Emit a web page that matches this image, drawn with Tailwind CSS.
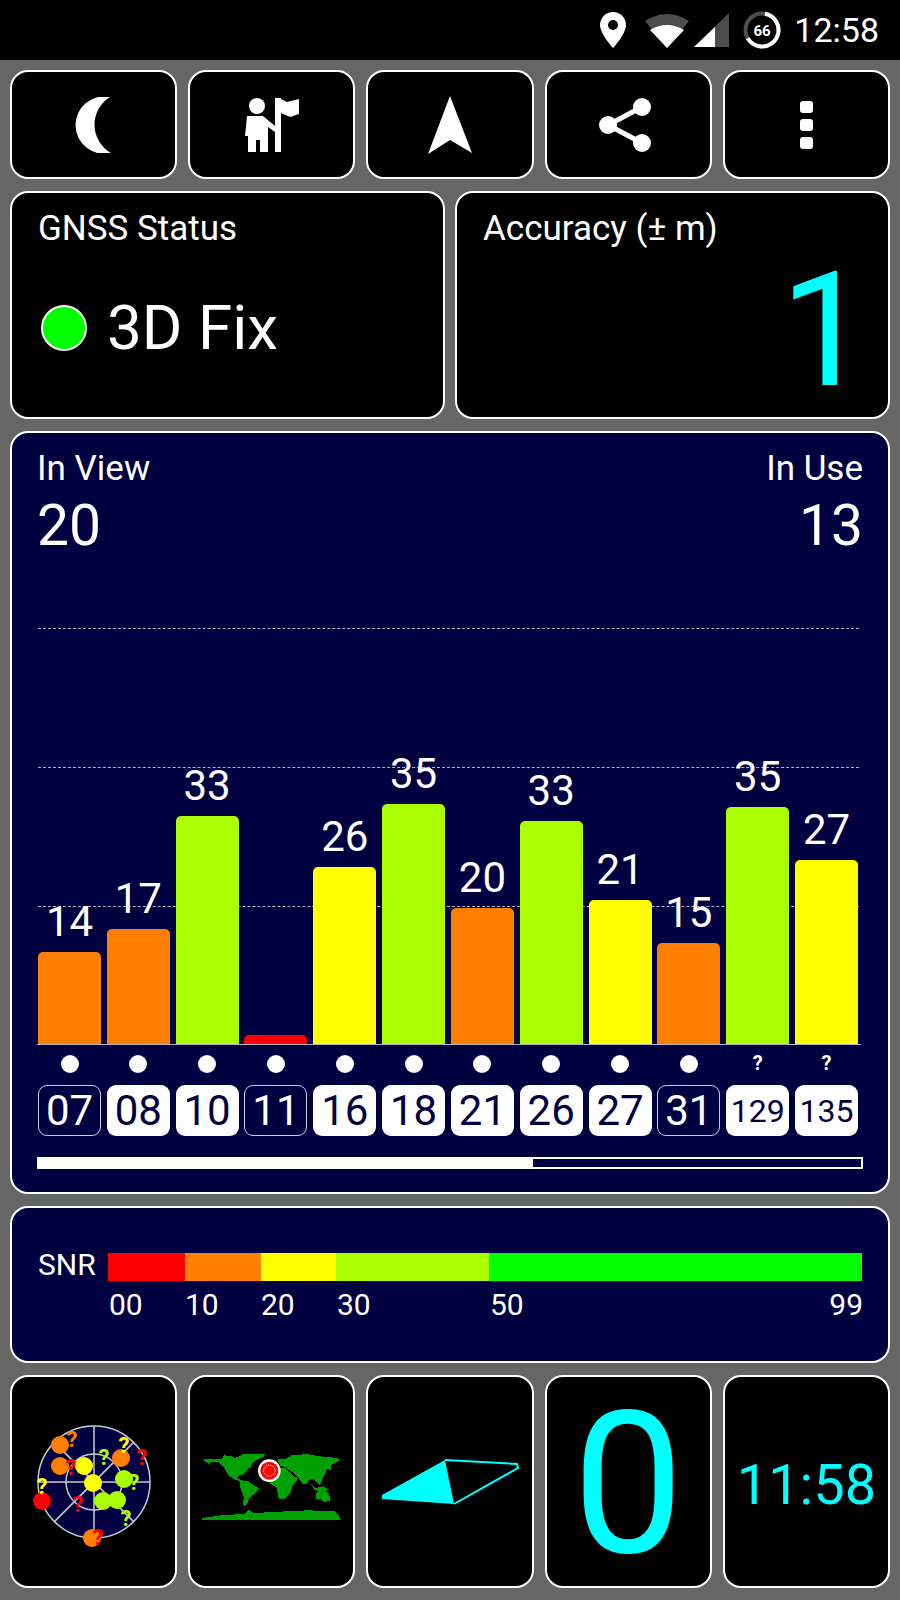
<!DOCTYPE html>
<html lang="en">
<head>
  <meta charset="UTF-8" />
  <title>GPS Test</title>
  <script src="https://cdn.jsdelivr.net/npm/@tailwindcss/browser@4"></script>
</head>
<body class="bg-[#666666] h-[1600px] w-[900px] overflow-hidden font-['Roboto',sans-serif] text-white">

  <!-- status bar -->
  <div class="h-[60px] bg-black flex items-center justify-end pr-[21px]">
    <svg class="w-[26px] h-[36px]" viewBox="0 0 26 36"><path fill="#fff" d="M13 0C5.8 0 0 5.8 0 13c0 9 13 23 13 23s13-14 13-23C26 5.800 20.200 0 13 0z"/><circle cx="13" cy="13" r="5" fill="#000"/></svg>
    <svg class="w-[44px] h-[35px] ml-[19px]" viewBox="0 0 44 35"><path fill="#4d4d4d" d="M0 8Q22-6 44 8L22 35z"/><path fill="#fff" d="M5 17Q22 7 39 17L22 35z"/></svg>
    <svg class="w-[35px] h-[34px] ml-[5px]" viewBox="0 0 35 34"><path fill="#4d4d4d" d="M0 34L35 0V34z"/><path fill="#fff" d="M0 34L21 14V34z"/></svg>
    <svg class="w-[38px] h-[38px] ml-[14px]" viewBox="0 0 38 38">
      <circle cx="19" cy="19" r="16.500" fill="none" stroke="#4d4d4d" stroke-width="4"/>
      <circle cx="19" cy="19" r="16.500" fill="none" stroke="#fff" stroke-width="4" pathLength="100" stroke-dasharray="64 36" transform="rotate(-80 19 19)"/>
      <text x="19" y="24.500" text-anchor="middle" fill="#fff" font-size="15" font-weight="700" font-family="Roboto">66</text>
    </svg>
    <span class="text-[34px] leading-none ml-[13px]">12:58</span>
  </div>

  <div class="px-[10px] pt-[10px] flex flex-col gap-[12px]">

    <!-- toolbar -->
    <div class="grid grid-cols-5 gap-[11px] h-[109px]">
      <div class="bg-black border-2 border-white rounded-[18px] flex items-center justify-center">
        <svg class="w-[36px] h-[56px] mr-[2px]" viewBox="0 0 36 56"><path fill="#fff" d="M35 0A28.700 28.700 0 1 0 36 56A32.500 32.500 0 0 1 35 0z"/></svg>
      </div>
      <div class="bg-black border-2 border-white rounded-[18px] flex items-center justify-center">
        <svg class="w-[60px] h-[60px]" viewBox="242 95 60 60"><circle cx="257" cy="106" r="8" fill="#fff"/><path fill="#fff" d="M247 116H263L275 126V132L268 127V152H260V140H256V152H248V136H245z"/><path fill="#fff" d="M275 98H281V99L287 102 299 99V114L290 117 281 113V152H275z"/></svg>
      </div>
      <div class="bg-black border-2 border-white rounded-[18px] flex items-center justify-center">
        <svg class="w-[44px] h-[58px]" viewBox="0 0 44 58"><path fill="#fff" d="M22 0L44 57 22 44 0 58z"/></svg>
      </div>
      <div class="bg-black border-2 border-white rounded-[18px] flex items-center justify-center">
        <svg class="w-[52px] h-[54px] mr-[6px]" viewBox="0 0 52 54"><path stroke="#fff" stroke-width="5" fill="none" d="M43 9L9 27 43 45"/><circle cx="43" cy="9" r="9" fill="#fff"/><circle cx="9" cy="27" r="9" fill="#fff"/><circle cx="43" cy="45" r="9" fill="#fff"/></svg>
      </div>
      <div class="bg-black border-2 border-white rounded-[18px] flex flex-col items-center justify-center gap-[6px]">
        <div class="w-[13px] h-[12px] bg-white rounded-[3px]"></div>
        <div class="w-[13px] h-[12px] bg-white rounded-[3px]"></div>
        <div class="w-[13px] h-[12px] bg-white rounded-[3px]"></div>
      </div>
    </div>

    <!-- status + accuracy -->
    <div class="grid grid-cols-2 gap-[10px] h-[228px]">
      <div class="bg-black border-2 border-white rounded-[18px] pl-[26px] pt-[16px]">
        <div class="text-[35px] leading-[40px]">GNSS Status</div>
        <div class="flex items-center mt-[45px] ml-[3px]">
          <div class="w-[46px] h-[46px] rounded-full bg-[#00ff00] border-2 border-white"></div>
          <div class="text-[62px] leading-[68px] ml-[20px]">3D Fix</div>
        </div>
      </div>
      <div class="relative bg-black border-2 border-white rounded-[18px] pl-[26px] pt-[16px]">
        <div class="text-[35px] leading-[40px]">Accuracy (± m)</div>
        <div class="absolute right-[18px] -bottom-[9px] text-[160px] leading-[190px] text-[#00ffff]">1</div>
      </div>
    </div>

    <!-- satellites -->
    <div class="bg-[#000040] border-2 border-white rounded-[18px] h-[763px] px-[25px] pt-[12px]">
      <div class="flex justify-between">
        <div>
          <div class="text-[35px] leading-[48px] -mb-[8px]">In View</div>
          <div class="text-[57px] leading-[60px] mt-[11px]">20</div>
        </div>
        <div class="text-right">
          <div class="text-[35px] leading-[48px] -mb-[8px]">In Use</div>
          <div class="text-[57px] leading-[60px] mt-[11px]">13</div>
        </div>
      </div>

      <div class="relative h-[444px] mt-[45px] border-b border-white/70 mr-[2px]">
        <div class="absolute left-[1px] right-[2px] top-[27px] border-t border-dashed border-white/70"></div>
        <div class="absolute left-[1px] right-[2px] top-[166px] border-t border-dashed border-white/70"></div>
        <div class="absolute left-[1px] right-[2px] top-[305px] border-t border-dashed border-white/70"></div>
        <div id="bars" class="relative grid grid-cols-12 gap-x-[5.8px] h-full pl-[1px] pr-[3px]"></div>
      </div>

      <div id="marks" class="grid grid-cols-12 gap-x-[5.8px] h-[38px] pl-[1px] pr-[5px] items-center"></div>
      <div id="ids" class="grid grid-cols-12 gap-x-[5.8px] h-[51px] mt-[2px] pl-[1px] pr-[5px]"></div>

      <div class="mt-[21px] h-[12px] border-2 border-white flex">
        <div class="w-[494px] bg-white"></div>
      </div>
    </div>

    <!-- snr legend -->
    <div class="bg-[#000040] border-2 border-white rounded-[18px] h-[157px] pl-[26px] pr-[26px] pt-[45px]">
      <div class="flex items-center">
        <div class="w-[70px] text-[30px] leading-[24px] mb-[4px]">SNR</div>
        <div class="flex h-[28px] w-[755px]">
          <div class="w-[77px] bg-[#ff0000]"></div>
          <div class="w-[76px] bg-[#ff8000]"></div>
          <div class="w-[75px] bg-[#ffff00]"></div>
          <div class="w-[153px] bg-[#aaff00]"></div>
          <div class="flex-1 bg-[#00ff00]"></div>
        </div>
      </div>
      <div class="flex ml-[71px] mt-[6px] text-[30px] leading-[36px] w-[754px]">
        <span class="w-[76px]">00</span>
        <span class="w-[76px]">10</span>
        <span class="w-[76px]">20</span>
        <span class="w-[153px]">30</span>
        <span>50</span>
        <span class="ml-auto">99</span>
      </div>
    </div>

    <!-- bottom shortcuts -->
    <div class="grid grid-cols-5 gap-[11px] h-[213px]">
      <div class="bg-black border-2 border-white rounded-[18px] flex items-center justify-center">
        <svg class="w-[130px] h-[130px] overflow-visible" viewBox="29 1417 130 130" font-family="Roboto" font-weight="700" font-size="22" text-anchor="middle">
          <circle cx="94" cy="1482" r="56" fill="#000040" stroke="#c8c8c8" stroke-width="1.500"/>
          <circle cx="94" cy="1482" r="28" fill="none" stroke="#c8c8c8" stroke-width="1.500"/>
          <path stroke="#c8c8c8" stroke-width="1.500" d="M94 1426V1538M38 1482H150M54.400 1442.400L133.600 1521.600M133.600 1442.400L54.400 1521.600"/>
          <g fill="#ff8000"><circle cx="60" cy="1445" r="9"/><circle cx="60" cy="1466" r="9"/><circle cx="121" cy="1458" r="9"/><circle cx="92" cy="1538" r="9"/></g>
          <g fill="#ffff00"><circle cx="84" cy="1466" r="9"/><circle cx="93" cy="1483" r="9"/></g>
          <g fill="#aaff00"><circle cx="124" cy="1479" r="9"/><circle cx="103" cy="1501" r="9"/><circle cx="117" cy="1500" r="9"/></g>
          <circle cx="42" cy="1501" r="9" fill="#ff0000"/>
          <text x="72" y="1447" fill="#ff8000">?</text>
          <text x="124" y="1453" fill="#ffff00">?</text>
          <text x="142" y="1465" fill="#ff0000">?</text>
          <text x="104" y="1465" fill="#aaff00">?</text>
          <text x="71" y="1475" fill="#ff0000">?</text>
          <text x="134" y="1490" fill="#aaff00">?</text>
          <text x="42" y="1494" fill="#ffff00">?</text>
          <text x="78" y="1512" fill="#ff0000">?</text>
          <text x="126" y="1526" fill="#aaff00">?</text>
          <text x="98" y="1545" fill="#ff0000">?</text>
        </svg>
      </div>
      <div class="bg-black border-2 border-white rounded-[18px] flex items-center justify-center">
        <svg class="w-[170px] h-[120px] shrink-0 mt-[3px] mr-[3px]" viewBox="0 0 510 360">
          <g fill="#00a000" shape-rendering="crispEdges">
            <path d="M52 110L78 108 110 108 118 97 140 100 150 105 165 100 175 92 240 92 235 102 215 112 202 120 196 135 190 135 185 145 175 155 160 158 158 168 175 172 170 176 150 170 128 155 118 135 100 118 80 118 70 122z"/>
            <path d="M165 172L190 174 205 186 222 196 210 212 195 222 188 238 180 250 175 246 176 220 166 195z"/>
            <path d="M272 110L300 108 320 97 370 93 400 100 440 103 468 108 455 118 440 125 436 142 425 135 420 155 412 168 405 188 395 176 385 168 375 168 365 184 352 182 340 165 325 150 300 132 285 128 282 120z"/>
            <path d="M260 135L300 135 325 160 340 165 322 190 315 210 298 228 282 228 275 195 262 185 250 178 248 160z"/>
            <path d="M392 212L410 198 420 205 432 214 438 232 420 237 404 228 394 228z"/>
            <path d="M378 182L392 196 412 190 432 200 420 206 400 204 388 200z"/>
            <path d="M52 285L100 278 180 272 190 260 205 270 250 268 320 264 370 262 450 265 462 278 468 290 52 290z"/>
          </g>
          <circle cx="253" cy="143" r="34" fill="#fff"/>
          <circle cx="253" cy="143" r="27" fill="#ff0000"/>
          <circle cx="253" cy="143" r="17" fill="none" stroke="#fff" stroke-width="3" stroke-dasharray="5 3"/>
        </svg>
      </div>
      <div class="bg-black border-2 border-white rounded-[18px] flex items-center justify-center">
        <svg class="w-[150px] h-[60px]" viewBox="375 1452 150 60"><path fill="#00ffff" d="M445 1460L454 1504 382 1499 382 1495z"/><path fill="none" stroke="#00ffff" stroke-width="2" d="M445 1460L517 1464 518 1468 454 1504"/></svg>
      </div>
      <div class="bg-black border-2 border-white rounded-[18px] flex items-center justify-center">
        <span class="text-[198px] leading-none text-[#00ffff] mt-[5px]">0</span>
      </div>
      <div class="bg-black border-2 border-white rounded-[18px] flex items-center justify-center">
        <span class="text-[56px] leading-none text-[#00ffff] mt-[6px]">11:58</span>
      </div>
    </div>
  </div>

  <script>
    const orange = '#ff8000', lime = '#aaff00', yellow = '#ffff00', red = '#ff0000';
    // id, snr, bar height, colour, has fix dot, used in fix
    const sats = [
      ['07', 14, 92, orange, true, false],
      ['08', 17, 115, orange, true, true],
      ['10', 33, 228, lime, true, true],
      ['11', '', 9, red, true, false],
      ['16', 26, 177, yellow, true, true],
      ['18', 35, 240, lime, true, true],
      ['21', 20, 136, orange, true, true],
      ['26', 33, 223, lime, true, true],
      ['27', 21, 144, yellow, true, true],
      ['31', 15, 101, orange, true, false],
      ['129', 35, 237, lime, false, true],
      ['135', 27, 184, yellow, false, true]
    ];

    const bars = document.getElementById('bars');
    const marks = document.getElementById('marks');
    const ids = document.getElementById('ids');

    sats.forEach(([id, snr, height, color, dot, used]) => {
      bars.innerHTML += `
        <div class="flex flex-col justify-end items-center">
          <div class="text-[42px] leading-[44px] mb-[8px]">${snr}</div>
          <div class="w-full rounded-t-[5px]" style="height:${height}px;background:${color}"></div>
        </div>`;

      marks.innerHTML += dot
        ? `<div class="w-[18px] h-[18px] rounded-full bg-white mx-auto"></div>`
        : `<div class="text-center text-[20px] font-bold leading-[20px] -mt-[3px]">?</div>`;

      const state = used ? 'bg-white text-[#000040]' : 'border border-white/80 text-white';
      const size = id.length > 2 ? 'text-[32px]' : 'text-[42px]';
      ids.innerHTML += `<div class="${state} ${size} leading-none rounded-[9px] flex items-center justify-center">${id}</div>`;
    });
  </script>
</body>
</html>
